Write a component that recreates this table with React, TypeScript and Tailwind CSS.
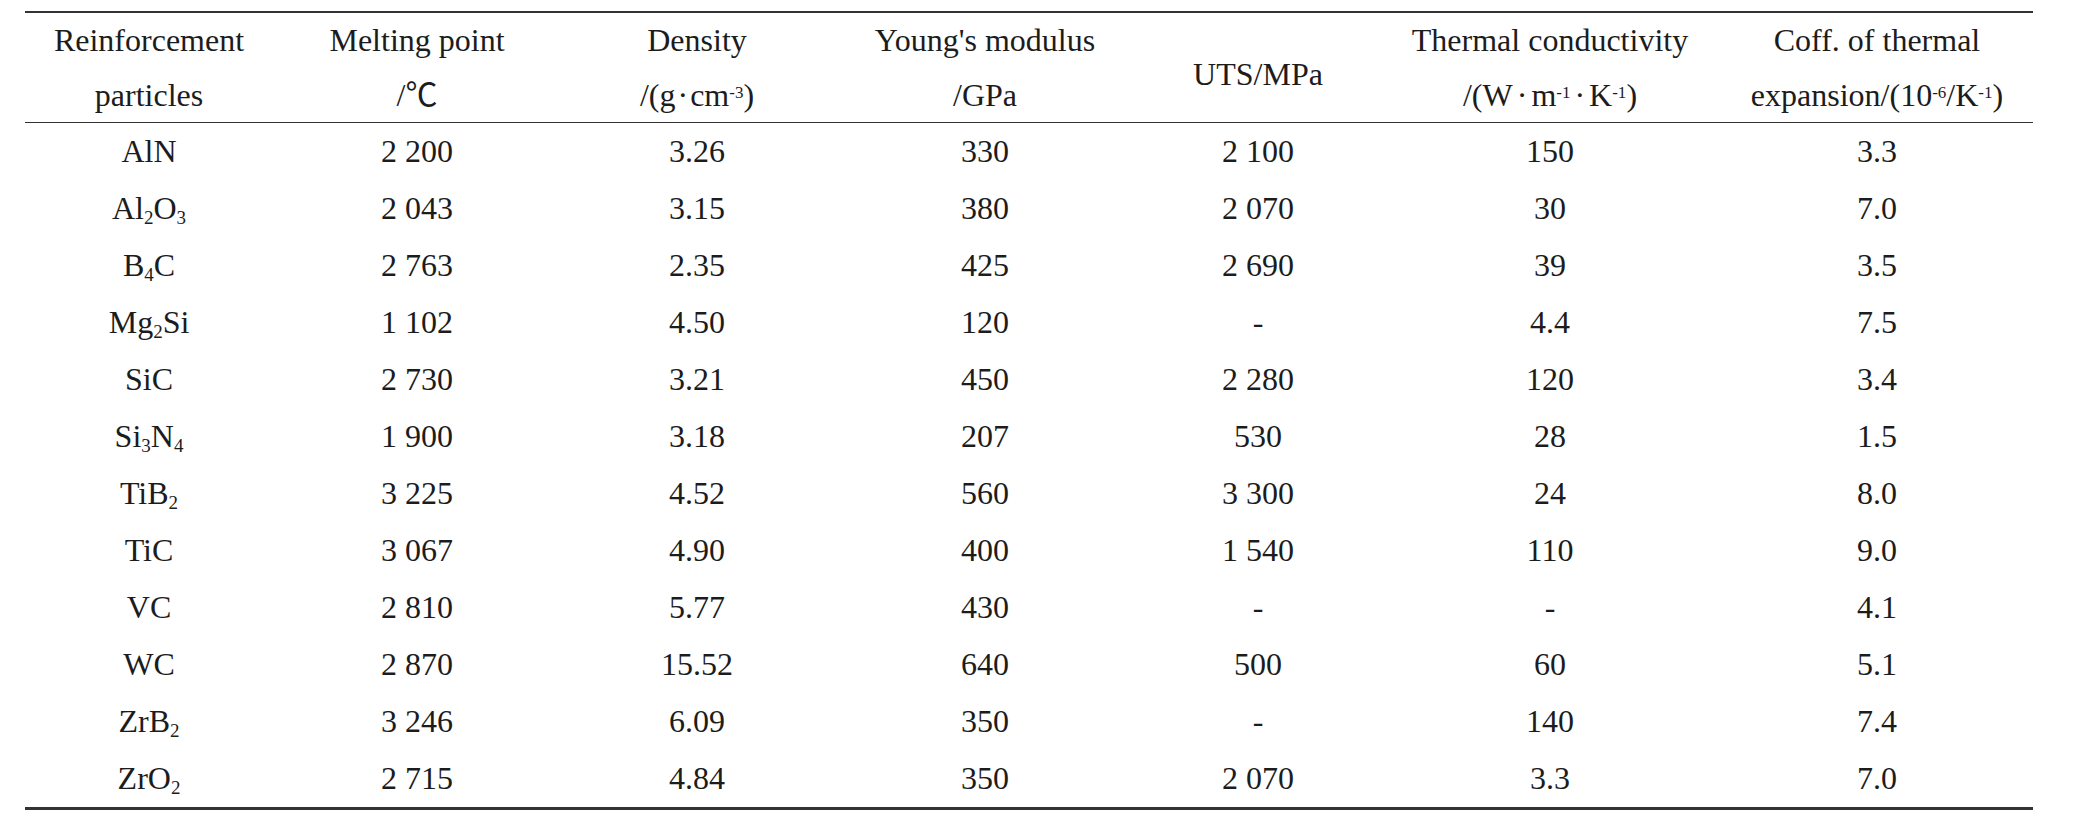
import type { ReactNode } from 'react';

interface Row {
  name: ReactNode;
  melting: string;
  density: string;
  modulus: string;
  uts: string;
  conductivity: string;
  expansion: string;
}

const Sub = ({ children }: { children: ReactNode }) => (
  <sub className="text-[19px]">{children}</sub>
);

const Sup = ({ children }: { children: ReactNode }) => (
  <sup className="text-[17px]">{children}</sup>
);

const Dot = () => <span className="mx-[4px]">·</span>;

const rows: Row[] = [
  { name: 'AlN', melting: '2 200', density: '3.26', modulus: '330', uts: '2 100', conductivity: '150', expansion: '3.3' },
  { name: <>Al<Sub>2</Sub>O<Sub>3</Sub></>, melting: '2 043', density: '3.15', modulus: '380', uts: '2 070', conductivity: '30', expansion: '7.0' },
  { name: <>B<Sub>4</Sub>C</>, melting: '2 763', density: '2.35', modulus: '425', uts: '2 690', conductivity: '39', expansion: '3.5' },
  { name: <>Mg<Sub>2</Sub>Si</>, melting: '1 102', density: '4.50', modulus: '120', uts: '-', conductivity: '4.4', expansion: '7.5' },
  { name: 'SiC', melting: '2 730', density: '3.21', modulus: '450', uts: '2 280', conductivity: '120', expansion: '3.4' },
  { name: <>Si<Sub>3</Sub>N<Sub>4</Sub></>, melting: '1 900', density: '3.18', modulus: '207', uts: '530', conductivity: '28', expansion: '1.5' },
  { name: <>TiB<Sub>2</Sub></>, melting: '3 225', density: '4.52', modulus: '560', uts: '3 300', conductivity: '24', expansion: '8.0' },
  { name: 'TiC', melting: '3 067', density: '4.90', modulus: '400', uts: '1 540', conductivity: '110', expansion: '9.0' },
  { name: 'VC', melting: '2 810', density: '5.77', modulus: '430', uts: '-', conductivity: '-', expansion: '4.1' },
  { name: 'WC', melting: '2 870', density: '15.52', modulus: '640', uts: '500', conductivity: '60', expansion: '5.1' },
  { name: <>ZrB<Sub>2</Sub></>, melting: '3 246', density: '6.09', modulus: '350', uts: '-', conductivity: '140', expansion: '7.4' },
  { name: <>ZrO<Sub>2</Sub></>, melting: '2 715', density: '4.84', modulus: '350', uts: '2 070', conductivity: '3.3', expansion: '7.0' },
];

const cols = 'grid grid-cols-[248px_288px_272px_304px_242px_342px_312px]';

const HeadCell = ({ children, className = '' }: { children: ReactNode; className?: string }) => (
  <div className={`flex flex-col items-center justify-center leading-[55px] whitespace-nowrap ${className}`}>
    {children}
  </div>
);

export default function App() {
  return (
    <div
      className="min-h-screen bg-white pl-[25px] pt-[11px] text-[32px] text-[#1c1c1c]"
      style={{ fontFamily: '"Liberation Serif", "Times New Roman", "Noto Sans CJK SC", serif' }}
    >
      <div className="w-[2008px] border-t-2 border-b-[3px] border-[#333]">
        {/* Header */}
        <div className={`${cols} h-[110px] border-b-[1.5px] border-[#333] text-center`}>
          <HeadCell>
            <span>Reinforcement</span>
            <span>particles</span>
          </HeadCell>
          <HeadCell>
            <span>Melting point</span>
            <span>/℃</span>
          </HeadCell>
          <HeadCell>
            <span>Density</span>
            <span>
              /(g<span className="mx-[2px]">·</span>cm<Sup>-3</Sup>)
            </span>
          </HeadCell>
          <HeadCell>
            <span>Young's modulus</span>
            <span>/GPa</span>
          </HeadCell>
          <HeadCell className="pt-3">
            <span>UTS/MPa</span>
          </HeadCell>
          <HeadCell>
            <span>Thermal conductivity</span>
            <span>
              /(W<Dot />m<Sup>-1</Sup><Dot />K<Sup>-1</Sup>)
            </span>
          </HeadCell>
          <HeadCell>
            <span>Coff. of thermal</span>
            <span>
              expansion/(10<Sup>-6</Sup>/K<Sup>-1</Sup>)
            </span>
          </HeadCell>
        </div>

        {/* Body */}
        {rows.map((r, i) => (
          <div key={i} className={`${cols} h-[57px] items-center text-center leading-[57px] whitespace-nowrap`}>
            <div>{r.name}</div>
            <div>{r.melting}</div>
            <div>{r.density}</div>
            <div>{r.modulus}</div>
            <div>{r.uts}</div>
            <div>{r.conductivity}</div>
            <div>{r.expansion}</div>
          </div>
        ))}
      </div>
    </div>
  );
}
